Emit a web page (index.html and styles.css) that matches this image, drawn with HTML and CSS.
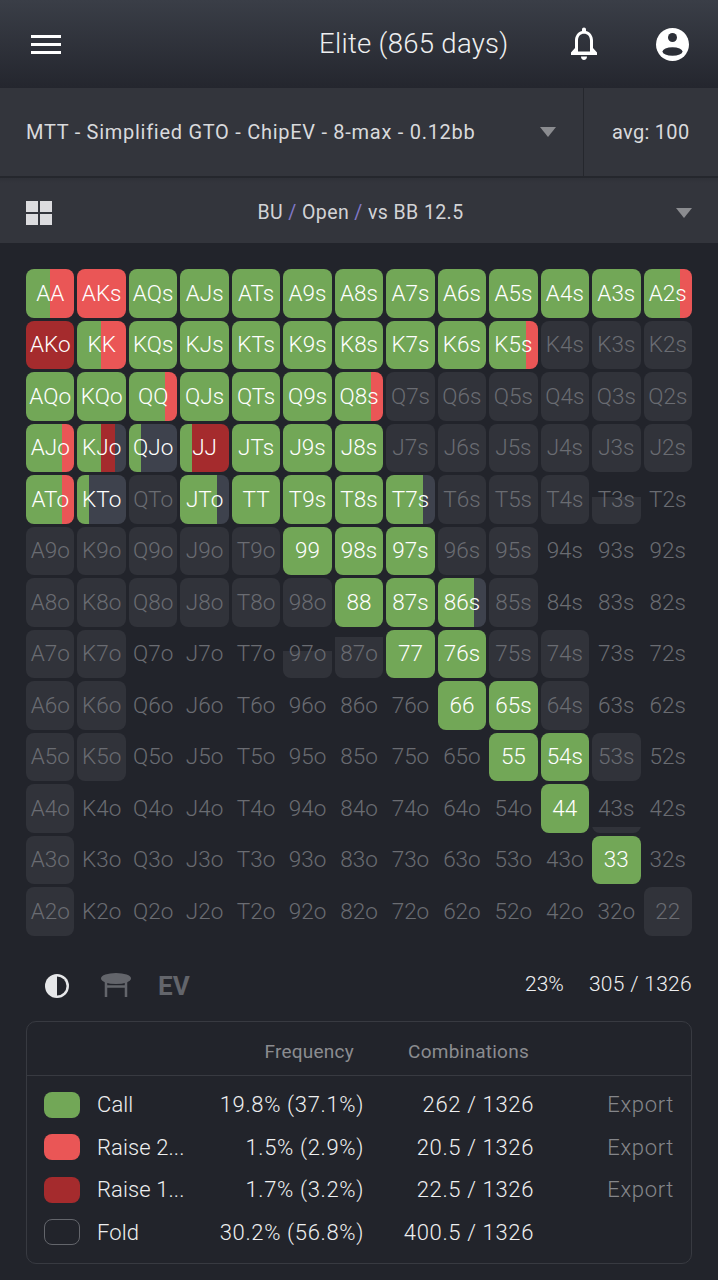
FILE: index.html
```html
<!DOCTYPE html>
<html lang="en">
<head>
    <meta charset="UTF-8">
    <meta name="viewport" content="width=device-width, initial-scale=1.0">
    <title>Preflop ranges</title>
    <link rel="stylesheet" href="styles.css">
</head>
<body>
    <header class="topbar">
        <div class="burger"><span></span><span></span><span></span></div>
        <div class="plan">Elite (865 days)</div>
        <svg class="bell" viewBox="0 0 28 34"><path fill-rule="evenodd" d="M14 .5c-1.200 0-2 .9-2 2v1.400C7.500 5 5 9 5 13.500V21l-4 4.500V28h26v-2.500L23 21v-7.500C23 9 20.500 5 16 3.900V2.500c0-1.100-.8-2-2-2zM8 13.500c0-4 2.400-6.700 6-6.700s6 2.700 6 6.700v11H8z" fill="#fff"/><path d="M11 29.500h6c0 2.200-1.300 3.600-3 3.600s-3-1.400-3-3.600z" fill="#fff"/></svg>
        <svg class="avatar" viewBox="0 0 33 33"><circle cx="16.500" cy="16.500" r="16.500" fill="#fff"/><circle cx="16.500" cy="9.500" r="4.500" fill="#2c2f37"/><ellipse cx="16.500" cy="23.500" rx="10" ry="4.300" fill="#2c2f37"/></svg>
    </header>

    <div class="selectbar">
        <div class="select-main">
            <span>MTT - Simplified GTO - ChipEV - 8-max - 0.12bb</span>
            <i class="caret"></i>
        </div>
        <div class="select-avg">avg: 100</div>
    </div>

    <div class="pathbar">
        <div class="squares"><span></span><span></span><span></span><span></span></div>
        <div class="path">BU <b>/</b> Open <b>/</b> vs BB 12.5</div>
        <i class="caret"></i>
    </div>

    <main class="content">
        <div class="grid">
            <!-- AA row -->
            <div class="cell mix-call-r2" style="--split:49%">AA</div>
            <div class="cell r2">AKs</div>
            <div class="cell call">AQs</div>
            <div class="cell call">AJs</div>
            <div class="cell call">ATs</div>
            <div class="cell call">A9s</div>
            <div class="cell call">A8s</div>
            <div class="cell call">A7s</div>
            <div class="cell call">A6s</div>
            <div class="cell call">A5s</div>
            <div class="cell call">A4s</div>
            <div class="cell call">A3s</div>
            <div class="cell mix-call-r2" style="--split:76%">A2s</div>
            <!-- KK row -->
            <div class="cell r1">AKo</div>
            <div class="cell mix-call-r2" style="--split:50%">KK</div>
            <div class="cell call">KQs</div>
            <div class="cell call">KJs</div>
            <div class="cell call">KTs</div>
            <div class="cell call">K9s</div>
            <div class="cell call">K8s</div>
            <div class="cell call">K7s</div>
            <div class="cell call">K6s</div>
            <div class="cell mix-call-r2" style="--split:75%">K5s</div>
            <div class="cell fold">K4s</div>
            <div class="cell fold">K3s</div>
            <div class="cell fold">K2s</div>
            <!-- QQ row -->
            <div class="cell call">AQo</div>
            <div class="cell call">KQo</div>
            <div class="cell mix-call-r2" style="--split:75%">QQ</div>
            <div class="cell call">QJs</div>
            <div class="cell call">QTs</div>
            <div class="cell call">Q9s</div>
            <div class="cell mix-call-r2" style="--split:75%">Q8s</div>
            <div class="cell fold">Q7s</div>
            <div class="cell fold">Q6s</div>
            <div class="cell fold">Q5s</div>
            <div class="cell fold">Q4s</div>
            <div class="cell fold">Q3s</div>
            <div class="cell fold">Q2s</div>
            <!-- JJ row -->
            <div class="cell mix-call-r2" style="--split:76%">AJo</div>
            <div class="cell mix-kjo">KJo</div>
            <div class="cell mix-call-none" style="--split:25%">QJo</div>
            <div class="cell mix-call-r1" style="--split:25%">JJ</div>
            <div class="cell call">JTs</div>
            <div class="cell call">J9s</div>
            <div class="cell call">J8s</div>
            <div class="cell fold">J7s</div>
            <div class="cell fold">J6s</div>
            <div class="cell fold">J5s</div>
            <div class="cell fold">J4s</div>
            <div class="cell fold">J3s</div>
            <div class="cell fold">J2s</div>
            <!-- TT row -->
            <div class="cell mix-call-r2" style="--split:76%">ATo</div>
            <div class="cell mix-call-none" style="--split:25%">KTo</div>
            <div class="cell fold">QTo</div>
            <div class="cell mix-call-none" style="--split:76%">JTo</div>
            <div class="cell call">TT</div>
            <div class="cell call">T9s</div>
            <div class="cell call">T8s</div>
            <div class="cell mix-call-none" style="--split:76%">T7s</div>
            <div class="cell fold">T6s</div>
            <div class="cell fold">T5s</div>
            <div class="cell fold">T4s</div>
            <div class="cell fold-part" style="--fill:55%">T3s</div>
            <div class="cell off">T2s</div>
            <!-- 99 row -->
            <div class="cell fold">A9o</div>
            <div class="cell fold">K9o</div>
            <div class="cell fold">Q9o</div>
            <div class="cell fold">J9o</div>
            <div class="cell fold">T9o</div>
            <div class="cell call">99</div>
            <div class="cell call">98s</div>
            <div class="cell call">97s</div>
            <div class="cell fold">96s</div>
            <div class="cell fold">95s</div>
            <div class="cell off">94s</div>
            <div class="cell off">93s</div>
            <div class="cell off">92s</div>
            <!-- 88 row -->
            <div class="cell fold">A8o</div>
            <div class="cell fold">K8o</div>
            <div class="cell fold">Q8o</div>
            <div class="cell fold">J8o</div>
            <div class="cell fold">T8o</div>
            <div class="cell fold">98o</div>
            <div class="cell call">88</div>
            <div class="cell call">87s</div>
            <div class="cell mix-call-none" style="--split:76%">86s</div>
            <div class="cell fold">85s</div>
            <div class="cell off">84s</div>
            <div class="cell off">83s</div>
            <div class="cell off">82s</div>
            <!-- 77 row -->
            <div class="cell fold">A7o</div>
            <div class="cell fold">K7o</div>
            <div class="cell off">Q7o</div>
            <div class="cell off">J7o</div>
            <div class="cell off">T7o</div>
            <div class="cell fold-part" style="--fill:56%">97o</div>
            <div class="cell fold-part" style="--fill:85%">87o</div>
            <div class="cell call">77</div>
            <div class="cell call">76s</div>
            <div class="cell fold">75s</div>
            <div class="cell fold">74s</div>
            <div class="cell off">73s</div>
            <div class="cell off">72s</div>
            <!-- 66 row -->
            <div class="cell fold">A6o</div>
            <div class="cell fold">K6o</div>
            <div class="cell off">Q6o</div>
            <div class="cell off">J6o</div>
            <div class="cell off">T6o</div>
            <div class="cell off">96o</div>
            <div class="cell off">86o</div>
            <div class="cell off">76o</div>
            <div class="cell call">66</div>
            <div class="cell call">65s</div>
            <div class="cell fold">64s</div>
            <div class="cell off">63s</div>
            <div class="cell off">62s</div>
            <!-- 55 row -->
            <div class="cell fold">A5o</div>
            <div class="cell fold">K5o</div>
            <div class="cell off">Q5o</div>
            <div class="cell off">J5o</div>
            <div class="cell off">T5o</div>
            <div class="cell off">95o</div>
            <div class="cell off">85o</div>
            <div class="cell off">75o</div>
            <div class="cell off">65o</div>
            <div class="cell call">55</div>
            <div class="cell call">54s</div>
            <div class="cell fold">53s</div>
            <div class="cell off">52s</div>
            <!-- 44 row -->
            <div class="cell fold">A4o</div>
            <div class="cell off">K4o</div>
            <div class="cell off">Q4o</div>
            <div class="cell off">J4o</div>
            <div class="cell off">T4o</div>
            <div class="cell off">94o</div>
            <div class="cell off">84o</div>
            <div class="cell off">74o</div>
            <div class="cell off">64o</div>
            <div class="cell off">54o</div>
            <div class="cell call">44</div>
            <div class="cell fold-part" style="--fill:13%">43s</div>
            <div class="cell off">42s</div>
            <!-- 33 row -->
            <div class="cell fold">A3o</div>
            <div class="cell off">K3o</div>
            <div class="cell off">Q3o</div>
            <div class="cell off">J3o</div>
            <div class="cell off">T3o</div>
            <div class="cell off">93o</div>
            <div class="cell off">83o</div>
            <div class="cell off">73o</div>
            <div class="cell off">63o</div>
            <div class="cell off">53o</div>
            <div class="cell off">43o</div>
            <div class="cell call">33</div>
            <div class="cell off">32s</div>
            <!-- 22 row -->
            <div class="cell fold">A2o</div>
            <div class="cell off">K2o</div>
            <div class="cell off">Q2o</div>
            <div class="cell off">J2o</div>
            <div class="cell off">T2o</div>
            <div class="cell off">92o</div>
            <div class="cell off">82o</div>
            <div class="cell off">72o</div>
            <div class="cell off">62o</div>
            <div class="cell off">52o</div>
            <div class="cell off">42o</div>
            <div class="cell off">32o</div>
            <div class="cell fold">22</div>
        </div>

        <div class="toolbar">
            <svg class="contrast" viewBox="0 0 26 26"><circle cx="13" cy="13" r="12" fill="#e6e7e9"/><path d="M13 3.500a9.500 9.500 0 0 1 0 19z" fill="#22242b"/></svg>
            <svg class="table-icon" viewBox="0 0 30 25"><ellipse cx="15" cy="5.500" rx="15" ry="5.500" fill="#63656b"/><path d="M5 9v15M25 9v15M5 13.500h20" stroke="#63656b" stroke-width="2.500" fill="none"/></svg>
            <span class="ev">EV</span>
            <span class="percent">23%</span>
            <span class="combos">305 / 1326</span>
        </div>

        <div class="legend">
            <div class="legend-head">
                <span class="head-freq">Frequency</span>
                <span class="head-comb">Combinations</span>
            </div>
            <div class="legend-rows">
                <div class="legend-row">
                    <i class="swatch sw-call"></i>
                    <span class="name">Call</span>
                    <span class="num">19.8% (37.1%)</span>
                    <span class="num">262 / 1326</span>
                    <span class="export">Export</span>
                </div>
                <div class="legend-row">
                    <i class="swatch sw-r2"></i>
                    <span class="name">Raise 2...</span>
                    <span class="num">1.5% (2.9%)</span>
                    <span class="num">20.5 / 1326</span>
                    <span class="export">Export</span>
                </div>
                <div class="legend-row">
                    <i class="swatch sw-r1"></i>
                    <span class="name">Raise 1...</span>
                    <span class="num">1.7% (3.2%)</span>
                    <span class="num">22.5 / 1326</span>
                    <span class="export">Export</span>
                </div>
                <div class="legend-row">
                    <i class="swatch sw-fold"></i>
                    <span class="name">Fold</span>
                    <span class="num">30.2% (56.8%)</span>
                    <span class="num">400.5 / 1326</span>
                    <span class="export"></span>
                </div>
            </div>
        </div>
    </main>
</body>
</html>
```

FILE: styles.css
```css
:root {
    --green: #72a757;
    --red: #ea5656;
    --dark-red: #a52b2d;
    --slate: #3e424d;
    --empty: #31333a;
}

* {
    box-sizing: border-box;
}

body {
    margin: 0;
    height: 1280px;
    overflow: hidden;
    background-color: #22242b;
    color: #e4e5e7;
    font-family: Roboto, "Liberation Sans", sans-serif;
}

/* top bar */
.topbar {
    height: 88px;
    display: flex;
    align-items: center;
    padding: 0 29px 0 31px;
    background: linear-gradient(#3a3e47, #24262e);
}

.burger {
    width: 30px;
    margin-top: 1px;
    display: flex;
    flex-direction: column;
    gap: 5px;
}

.burger span {
    height: 3px;
    background-color: #fff;
}

.plan {
    width: 189px;
    margin-left: 258px;
    margin-bottom: 2px;
    font-size: 27.500px;
    font-weight: 300;
    letter-spacing: .3px;
    color: #eeeff0;
    white-space: nowrap;
}

.bell {
    width: 28px;
    height: 34px;
    margin-left: 62px;
}

.avatar {
    width: 33px;
    height: 33px;
    margin-left: auto;
}

/* selector bars */
.selectbar {
    height: 90px;
    display: flex;
    background-color: #33353c;
    border-bottom: 2px solid #25272d;
}

.select-main {
    flex: 1;
    display: flex;
    align-items: center;
    justify-content: space-between;
    padding: 0 27px 0 26px;
    font-size: 20px;
    letter-spacing: .72px;
    color: #d9dadc;
    border-right: 1px solid #25272d;
}

.select-avg {
    width: 134px;
    display: flex;
    align-items: center;
    padding-left: 28px;
    font-size: 20px;
    letter-spacing: .3px;
    color: #d9dadc;
}

.caret {
    width: 0;
    height: 0;
    border-left: 8px solid transparent;
    border-right: 8px solid transparent;
    border-top: 10px solid #8b8c90;
}

.pathbar {
    height: 65px;
    display: flex;
    align-items: center;
    padding: 4px 26px 0;
    background: linear-gradient(#2f3138 0, #33353c 5px);
}

.squares {
    width: 26px;
    display: grid;
    grid-template-columns: 1fr 1fr;
    gap: 2px;
}

.squares span {
    height: 11px;
    background-color: #dcdcdf;
}

.path {
    flex: 1;
    text-align: center;
    padding-right: 7px;
    font-size: 19.500px;
    letter-spacing: .4px;
    color: #d2d3d6;
}

.path b {
    font-weight: 400;
    color: #8279c8;
}

/* hand grid */
.content {
    padding: 26px 26px 0;
}

.grid {
    display: grid;
    grid-template-columns: repeat(13, 1fr);
    grid-auto-rows: 48.500px;
    gap: 3px;
}

.cell {
    display: flex;
    align-items: center;
    justify-content: center;
    padding-bottom: 1px;
    border-radius: 8px;
    font-size: 22.500px;
    font-weight: 300;
    color: #fff;
    white-space: nowrap;
}

.call {
    background-color: var(--green);
}

.r2 {
    background-color: var(--red);
}

.r1 {
    background-color: var(--dark-red);
}

.fold {
    background-color: var(--empty);
    color: #6a6c72;
}

.off {
    color: #6a6c72;
}

.fold-part {
    color: #6a6c72;
    background: linear-gradient(to top, var(--empty) var(--fill), transparent var(--fill));
}

.mix-call-r2 {
    background: linear-gradient(to right, var(--green) var(--split), var(--red) var(--split));
}

.mix-call-r1 {
    background: linear-gradient(to right, var(--green) var(--split), var(--dark-red) var(--split));
}

.mix-call-none {
    background: linear-gradient(to right, var(--green) var(--split), var(--slate) var(--split));
}

.mix-kjo {
    background: linear-gradient(to right, var(--green) 50%, var(--dark-red) 50%, var(--dark-red) 77%, var(--slate) 77%);
}

/* toolbar under the grid */
.toolbar {
    height: 50px;
    margin-top: 25px;
    display: flex;
    align-items: center;
    padding-left: 18px;
}

.contrast {
    width: 26px;
    height: 26px;
}

.table-icon {
    width: 30px;
    height: 25px;
    margin-left: 31px;
}

.ev {
    margin-left: 27px;
    font-size: 26px;
    font-weight: 700;
    color: #63656b;
}

.percent {
    margin-left: auto;
    padding-bottom: 3px;
    font-size: 21px;
    font-weight: 300;
    color: #eeeff0;
}

.combos {
    margin-left: 25px;
    padding-bottom: 3px;
    font-size: 21px;
    font-weight: 300;
    letter-spacing: .3px;
    color: #eeeff0;
}

/* legend table */
.legend {
    height: 243px;
    margin-top: 10px;
    border: 1px solid #383a41;
    border-radius: 10px;
}

.legend-head {
    height: 54px;
    display: flex;
    align-items: center;
    padding-top: 6px;
    border-bottom: 1px solid #383a41;
    font-size: 19px;
    letter-spacing: .25px;
    color: #8b8c90;
}

.head-freq {
    width: 327px;
    text-align: right;
}

.head-comb {
    width: 175px;
    text-align: right;
}

.legend-rows {
    padding-top: 8px;
}

.legend-row {
    height: 42.500px;
    display: grid;
    grid-template-columns: 36px 90px 194px 170px 1fr;
    align-items: center;
    padding: 0 17px;
    font-size: 22px;
    font-weight: 300;
    letter-spacing: .65px;
    color: #eeeff0;
}

.swatch {
    display: block;
    height: 26px;
    border-radius: 8px;
}

.sw-call {
    background-color: var(--green);
}

.sw-r2 {
    background-color: var(--red);
}

.sw-r1 {
    background-color: var(--dark-red);
}

.sw-fold {
    border: 1.500px solid #63656b;
}

.name {
    padding-left: 17px;
    letter-spacing: .1px;
    white-space: nowrap;
}

.num {
    text-align: right;
    white-space: nowrap;
}

.export {
    text-align: right;
    color: #85868a;
}
```
